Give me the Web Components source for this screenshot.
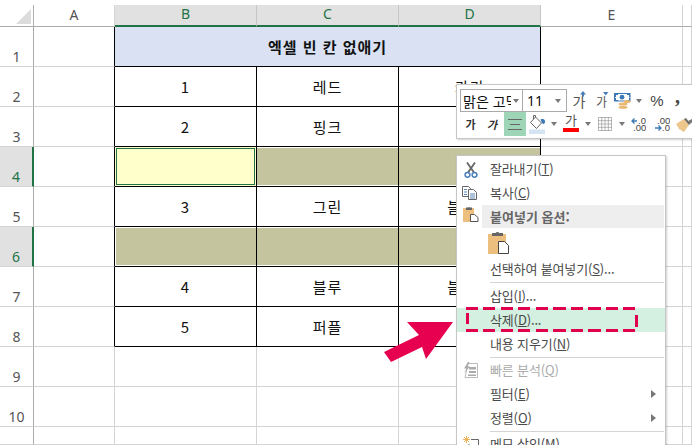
<!DOCTYPE html>
<html lang="ko"><head><meta charset="utf-8"><style>
html,body{margin:0;padding:0;background:#fff;overflow:hidden}
body{width:692px;height:445px;font-family:"Noto Sans CJK KR","Liberation Sans",sans-serif}
</style></head><body>
<excel-window>
<excel-sheet></excel-sheet>
<mini-toolbar slot="over"></mini-toolbar>
<context-menu slot="over"></context-menu>
<callout-arrow slot="over"></callout-arrow>
</excel-window>
<script>
const FONT='"Noto Sans CJK KR","Liberation Sans",sans-serif';
class ExcelWindow extends HTMLElement{constructor(){super();this.attachShadow({mode:'open'}).innerHTML=`<style>
:host{display:block;position:relative;width:692px;height:445px;overflow:hidden;font-family:${FONT}}
</style><slot></slot><slot name="over"></slot>`}}
customElements.define('excel-window',ExcelWindow);

class ExcelSheet extends HTMLElement{constructor(){super();
 const cols=['A','B','C','D','E',''];
 const sel={B:1,C:1,D:1};
 const rowsData={1:{},2:{B:'1',C:'레드',D:'카키'},3:{B:'2',C:'핑크'},4:{},5:{B:'3',C:'그린',D:'블라우'},6:{},7:{B:'4',C:'블루',D:'블라우'},8:{B:'5',C:'퍼플'},9:{},10:{},11:{}};
 let h='<div class="corner"><svg width="15" height="15" viewBox="0 0 15 15"><path d="M15 0V15H0Z" fill="#dcdcdc"/></svg></div>';
 cols.forEach(c=>h+=`<div class="ch ${sel[c]?'sel':''}">${c}</div>`);
 for(let r=1;r<=11;r++){
  h+=`<div class="rh ${r==4||r==6?'sel':''}">${r<=10?r:''}</div>`;
  cols.forEach(c=>{
   const t=(c&&rowsData[r][c])||'';
   let cl='';
   if(c&&'BCD'.includes(c)&&r<=8){cl='tb';
    if(r==4||r==6)cl+=' olive';
    if((r==4||r==6)&&c=='B')cl+=' olb';
   }
   h+=`<div class="c ${cl}">${t?`<span>${t}</span>`:''}</div>`;
  });
 }
 this.attachShadow({mode:'open'}).innerHTML=`<style>
 :host{display:grid;grid-template-columns:34px 81px 142px 142px 142px 142px 9px;grid-template-rows:5px 22px repeat(10,40px) 18px;width:692px;height:445px;font-size:15px;color:#111;box-sizing:border-box}
 .top{grid-column:1/-1}
 .corner{display:flex;justify-content:flex-end;align-items:flex-end;padding:0 2px 2px 0;box-sizing:border-box;border-right:1px solid #b0b0b0;border-bottom:1px solid #ababab;overflow:hidden}
 .ch{display:flex;align-items:center;justify-content:center;font:14px "Noto Sans",sans-serif;color:#555;border-right:1px solid #d4d4d4;border-bottom:1px solid #ababab;box-sizing:border-box;padding-bottom:3px}
 .ch.sel{background:#e1e1e1;color:#217346;border-bottom:2px solid #217346;border-right-color:#c6c6c6}
 .rh{display:flex;align-items:flex-end;justify-content:center;font:14px "Noto Sans",sans-serif;color:#555;box-sizing:border-box;border-right:1px solid #ababab;border-bottom:1px solid #d4d4d4;line-height:18px;padding-bottom:0}
 .rh.sel{background:#e1e1e1;color:#217346;border-right:2px solid #217346}
 .c{border-right:1px solid #d4d4d4;border-bottom:1px solid #d4d4d4;box-sizing:border-box;display:flex;align-items:center;justify-content:center;position:relative;white-space:nowrap;overflow:hidden}
 .tb{border-right:1px solid #000;border-bottom:1px solid #000;color:#111;padding-bottom:1px;letter-spacing:1px}
 .olive{background:#c4c59f;box-shadow:inset 0 1px 0 #fff,inset 0 -1px 0 #fff}
 .olb{box-shadow:inset 1px 1px 0 #fff,inset 0 -1px 0 #fff}
 .b1{grid-column:3/6;background:#d9e1f2;border-bottom:1px solid #000;border-right:1px solid #000;font-weight:700;font-size:15px;letter-spacing:1px;display:flex;align-items:center;justify-content:center;color:#111;box-sizing:border-box;padding-bottom:1px}
 .active{background:#ffffcc;box-shadow:none;overflow:visible}
 .active::after{content:"";position:absolute;inset:1px;border:1px solid #217346}
 </style><div class="top"></div>${h}`;
 const s=this.shadowRoot;
 const kids=[...s.children].filter(e=>e.classList.contains('c'));
 const at=(r,ci)=>kids[(r-1)*6+ci];
 at(1,1).className='b1';at(1,1).textContent='엑셀 빈 칸 없애기';
 at(1,2).remove();at(1,3).remove();
 for(let r=1;r<=8;r++){at(r,0).style.borderRight='1px solid #000';}
 at(4,1).className='c tb active';
 }}
customElements.define('excel-sheet',ExcelSheet);

const ic={
 up:`<svg width="22" height="23" viewBox="0 0 22 23"><text x="0.500" y="18" font-size="14" fill="#555" font-family='${FONT}'>가</text><path d="M11 2l3 3.500h-2v2h-2v-2H8z" fill="#4a7ebb"/></svg>`,
 down:`<svg width="18" height="23" viewBox="0 0 18 23"><text x="0" y="18" font-size="12" fill="#555" font-family='${FONT}'>가</text><path d="M7 3h5.500L9.700 6.500z" fill="#4a7ebb"/></svg>`,
 money:`<svg width="17" height="16" viewBox="0 0 17 16"><rect x=".5" y=".5" width="15.500" height="7.500" fill="#fff" stroke="#3d7ab5"/><circle cx="8" cy="4.200" r="2.400" fill="#3d7ab5"/><path d="M1 1h3v1H2v2H1zM13 1h3v3h-1V2h-2zM1 5h1v2h2v1H1zM15 5h1v3h-3V7h2z" fill="#3d7ab5"/><ellipse cx="13" cy="8.500" rx="3.500" ry="1.500" fill="#e9b872"/><ellipse cx="9" cy="11" rx="4.500" ry="1.500" fill="#e9b872"/><ellipse cx="9" cy="14.300" rx="4.500" ry="1.500" fill="#e9b872"/></svg>`,
 bucket:`<svg width="17" height="20" viewBox="0 0 17 20"><path d="M4.500 5V1.500h2V4" fill="none" stroke="#666"/><path d="M6.500 3l6 6-5 5.500-6-6z" fill="#fff" stroke="#666"/><path d="M11.500 5.500c2-1 4-.5 4.500 1.500.4 1.500-.5 3-1.500 3s-2-2-3-4.500z" fill="#3f79b9"/><rect x="0" y="15.500" width="16" height="4.500" fill="#d5e4f3"/></svg>`,
 grid:`<svg width="14" height="14" viewBox="0 0 14 14" fill="none" stroke="#777" stroke-dasharray="1 1"><path d="M.5.5h13v13H.5zM7 .5v13M.5 7h13M3.700 .5v13M10.300 .5v13M.5 3.700h13M.5 10.300h13"/></svg>`,
 dec1:`<svg width="15" height="14" viewBox="0 0 15 14" font-family="Liberation Sans" font-size="9.500" fill="#444"><path d="M6 4H1.500M3.500 1.500L1 4l2.500 2.500" fill="none" stroke="#3d7ab5" stroke-width="1.300"/><text x="7" y="7">.0</text><text x="2" y="14">.00</text></svg>`,
 dec2:`<svg width="15" height="14" viewBox="0 0 15 14" font-family="Liberation Sans" font-size="9.500" fill="#444"><text x="2" y="7">.00</text><path d="M0 11h5.500M3.500 8.500L6 11l-2.500 2.500" fill="none" stroke="#3d7ab5" stroke-width="1.300"/><text x="7" y="14">.0</text></svg>`,
 brush:`<svg width="18" height="15" viewBox="0 0 18 15"><path d="M0 7l8-5 5 6-5 7-2-1-1-1-2-1-1-2z" fill="#edc68c"/><path d="M8 2l2-1 3 4 1 2-1 1z" fill="#6a6a6a"/><path d="M12 4l6-3v3l-4 3z" fill="#777"/></svg>`,
 cut:`<svg width="14" height="16" viewBox="0 0 14 16" fill="none"><path d="M3 .5l7 10M11 .5l-7 10" stroke="#666" stroke-width="1.800"/><circle cx="3.500" cy="12.800" r="2.400" stroke="#4a7ebb" stroke-width="1.500"/><circle cx="10.500" cy="12.800" r="2.400" stroke="#4a7ebb" stroke-width="1.500"/></svg>`,
 copy:`<svg width="16" height="14" viewBox="0 0 16 14" fill="#fff" stroke="#666"><path d="M.5.5h6l2 2v8h-8z"/><path d="M6.500 3.500h5l3 3v7h-8z"/><path d="M2 3.500h3M2 6h3M2 8.500h3M8 8h5M8 10h5M8 12h5" stroke="#5a86b8" fill="none"/></svg>`,
 paste:`<svg width="16" height="16" viewBox="0 0 16 16"><rect x="0" y="2" width="11" height="14" fill="#ecbf7e"/><path d="M3 4V1.500h2a1.500 1.500 0 0 1 2 0h2V4z" fill="#666"/><path d="M7.500 8.500h4l3.500 3v4h-7.500z" fill="#fff" stroke="#555"/></svg>`,
 paste2:`<svg width="22" height="23" viewBox="0 0 22 23"><rect x="0" y="3" width="18" height="20" fill="#ecbf7e"/><path d="M4 5V2h3.500a2.500 2.500 0 0 1 4 0H15v3z" fill="#666"/><path d="M10.500 10.500h6l4 4v8h-10z" fill="#fff" stroke="#444"/></svg>`,
 quick:`<svg width="15" height="16" viewBox="0 0 15 16"><path d="M5 1.500h9.500v14H2z" fill="#fff" stroke="#bbb"/><path d="M6 5h7v2.500H6zM6 9h7v2H6zM5 12.500h8v1.500H5z" fill="#aaa"/><path d="M5 0L1 6.500h2.500L1 11l6-6.500H4.500L6.500 0z" fill="#aaa"/></svg>`,
 note:`<svg width="16" height="16" viewBox="0 0 16 16" fill="none"><path d="M8 3.500h7.500V16M6 16V8" stroke="#666"/><path d="M3.500 0v7M0 3.500h7M1 1l5 5M6 1L1 6" stroke="#ecb65a"/></svg>`
};
class MiniToolbar extends HTMLElement{constructor(){super();this.attachShadow({mode:'open'}).innerHTML=`<style>
:host{position:absolute;left:456px;top:84px;width:240px;height:55px;background:#fff;border:1px solid #c6c6c6;box-shadow:1px 1px 2px rgba(0,0,0,.18);box-sizing:border-box;display:flex;flex-direction:column;padding:4px 0 0 3px;font-family:${FONT};color:#333}
.r{display:flex;align-items:center;width:240px}
.r>*{flex:none}
.r1{height:23px}.r2{height:24px}
.box{border:1px solid #ababab;height:23px;box-sizing:border-box;display:flex;align-items:center;position:relative;font-size:14px;color:#111;overflow:hidden;background:#fff}
.font{width:63px;padding-left:2px}
.size{width:44px;padding-left:4px;border-left:0;font-family:"Noto Sans"}
.txt{width:48px;overflow:hidden;white-space:nowrap}
.ar{width:0;height:0;border:3px solid transparent;border-top:4px solid #777;border-bottom:0;display:block}
.box .ar{position:absolute;top:9px}
.i{display:flex;align-items:center;justify-content:center}
.g{font-size:11px;font-weight:700;color:#333;height:24px;display:flex;align-items:center;justify-content:center}
.it{font-style:italic}
.al{width:22px;height:24px;background:#9fd5b7;display:flex;align-items:center;justify-content:center}
.pc{font:15px "Liberation Sans";color:#444;width:14px;text-align:center}
.fc{width:16px;height:24px;padding-bottom:4px;box-sizing:border-box;flex-direction:column;justify-content:flex-end;font-size:13px;color:#555;line-height:14px}
.fc b{width:16px;height:4px;background:#f00;display:block;margin-top:1px}
</style>
<div class="r r1">
<div class="box font"><span class="txt">맑은 고딕</span><i class="ar" style="right:3px"></i></div>
<div class="box size">11<i class="ar" style="right:5px"></i></div>
<div class="i" style="margin-left:5px">${ic.up}</div>
<div class="i" style="margin-left:2px">${ic.down}</div>
<div class="i">${ic.money}</div>
<i class="ar" style="margin-left:5px"></i>
<div class="pc" style="margin-left:8px">%</div>
<div style="font:700 20px/20px 'Liberation Serif';color:#444;margin-left:11px;margin-top:-10px">,</div>
</div>
<div class="r r2">
<div class="g" style="margin-left:5px;width:11px">가</div><div class="g it" style="margin-left:10px;width:12px">가</div>
<div class="al" style="margin-left:6px"><svg width="14" height="11" viewBox="0 0 14 11" stroke="#666"><path d="M0 .5h14M2 5.500h10M0 10.500h14"/></svg></div>
<div class="i" style="width:17px;margin-left:3px">${ic.bucket}</div><i class="ar" style="margin-left:5px"></i>
<div class="i fc" style="margin-left:6px">가<b></b></div><i class="ar" style="margin-left:6px"></i>
<div class="i" style="margin-left:7px">${ic.grid}</div><i class="ar" style="margin-left:7px"></i>
<div class="i" style="margin-left:6px">${ic.dec1}</div>
<div class="i" style="margin-left:9px">${ic.dec2}</div>
<div class="i" style="margin-left:6px">${ic.brush}</div>
</div>`}}
customElements.define('mini-toolbar',MiniToolbar);

class MenuItem extends HTMLElement{
 connectedCallback(){if(this.shadowRoot)return;
 const a=this.getAttribute('icon'),sub=this.hasAttribute('sub');
 this.attachShadow({mode:'open'}).innerHTML=`<style>
 :host{display:flex;align-items:center;height:24px;box-sizing:border-box;padding:0 0 2px 33px;position:relative;color:#4a4a4a;font-size:13px;white-space:nowrap;letter-spacing:-.15px}
 :host([dis]){color:#ababab}
 :host([hi]){background:#d3f0e0}
 :host([bar]){background:#eeeeee;margin:0 1px 0 25px;padding:0 0 1px 8px;font-weight:700;color:#666;height:23px;letter-spacing:0}
 .ic{position:absolute;left:6px;top:4px;display:flex}
 .sub{position:absolute;right:9px;top:8px;width:0;height:0;border:4px solid transparent;border-left:5px solid #777;border-right:0}
 </style>${a?`<span class="ic" style="${this.getAttribute('istyle')||''}">${ic[a]}</span>`:''}<slot></slot>${sub?'<i class="sub"></i>':''}`;}}
customElements.define('menu-item',MenuItem);

class ContextMenu extends HTMLElement{constructor(){super();this.attachShadow({mode:'open'}).innerHTML=`<style>
:host{position:absolute;left:456px;top:155px;width:210px;height:300px;background:#fff;border:1px solid #c6c6c6;box-shadow:1px 1px 2px rgba(0,0,0,.2);box-sizing:border-box;display:block;padding-top:1px;font-family:${FONT}}
hr{border:0;border-top:1px solid #d4d4d4;margin:1px 1px 1px 33px;height:0}
hr.t{margin-bottom:0}
.pi{height:29px;padding:3px 0 0 31px;box-sizing:border-box;display:flex;align-items:flex-start}
.pasteRow{display:flex;position:relative}
.ic{position:absolute;left:6px;top:1px;display:flex}
</style>
<menu-item icon="cut" istyle="left:7px;top:5px">잘라내기(<u>T</u>)</menu-item>
<menu-item icon="copy" istyle="left:5px;top:5px">복사(<u>C</u>)</menu-item>
<div class="pasteRow"><span class="ic">${ic.paste}</span><menu-item bar style="flex:1">붙여넣기 옵션:</menu-item></div>
<div class="pi">${ic.paste2}</div>
<menu-item>선택하여 붙여넣기(<u>S</u>)...</menu-item>
<hr>
<menu-item>삽입(<u>I</u>)...</menu-item>
<menu-item hi>삭제(<u>D</u>)...</menu-item>
<menu-item>내용 지우기(<u>N</u>)</menu-item>
<hr class="t">
<menu-item icon="quick" dis>빠른 분석(<u>Q</u>)</menu-item>
<menu-item sub>필터(<u>E</u>)</menu-item>
<menu-item sub>정렬(<u>O</u>)</menu-item>
<hr class="t">
<menu-item icon="note">메모 삽입(<u>M</u>)</menu-item>`}}
customElements.define('context-menu',ContextMenu);

class CalloutArrow extends HTMLElement{constructor(){super();this.attachShadow({mode:'open'}).innerHTML=`<style>
:host{position:absolute;left:0;top:0;width:692px;height:445px;display:block;pointer-events:none}
.d{position:absolute;left:466px;top:307px;width:172px;height:25px;box-sizing:border-box;
background:
 repeating-linear-gradient(90deg,#e0004d 0 12px,transparent 12px 17.500px) 0 0/100% 3px no-repeat,
 repeating-linear-gradient(90deg,#e0004d 0 12px,transparent 12px 17.500px) 0 100%/100% 3px no-repeat,
 linear-gradient(#e0004d,#e0004d) 0 6px/3px 11px no-repeat,
 linear-gradient(#e0004d,#e0004d) 100% 8px/3px 12px no-repeat}
svg{position:absolute;left:384px;top:320px}
</style><div class="d"></div><svg width="70" height="44" viewBox="0 0 70 44"><path d="M0 32L35 15 23 2H69L42 39 38 27 7 42z" fill="#e6004f"/></svg>`}}
customElements.define('callout-arrow',CalloutArrow);
</script></body></html>
